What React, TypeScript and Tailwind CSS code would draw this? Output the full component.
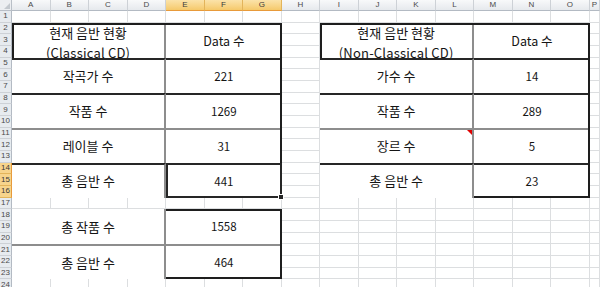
const COLS = ['A', 'B', 'C', 'D', 'E', 'F', 'G', 'H', 'I', 'J', 'K', 'L', 'M', 'N', 'O', 'P'];
const SELECTED_COLS = ['E', 'F', 'G'];
const SELECTED_ROWS = [14, 15, 16];
const ROWS = Array.from({ length: 24 }, (_, i) => i + 1);

const GRID =
  'grid grid-cols-[12px_repeat(15,38.53px)_minmax(0,1fr)] grid-rows-[11px_repeat(24,11.68px)]';

const FONT = "font-['Noto_Sans_CJK_KR','Noto_Sans',sans-serif]";

type Row = { rows: string; label: string; value: string; line: 'dark' | 'gray' | 'none' };

const LEFT_COL = 'col-start-2 col-end-6';
const LEFT_VAL = 'col-start-6 col-end-9';
const RIGHT_COL = 'col-start-10 col-end-14';
const RIGHT_VAL = 'col-start-14 col-end-17';

const LEFT_ROWS: Row[] = [
  { rows: 'row-start-6 row-end-9', label: '작곡가 수', value: '221', line: 'dark' },
  { rows: 'row-start-9 row-end-12', label: '작품 수', value: '1269', line: 'dark' },
  { rows: 'row-start-12 row-end-15', label: '레이블 수', value: '31', line: 'gray' },
  { rows: 'row-start-15 row-end-18', label: '총 음반 수', value: '441', line: 'dark' },
];

const TOTAL_ROWS: Row[] = [
  { rows: 'row-start-19 row-end-22', label: '총 작품 수', value: '1558', line: 'none' },
  { rows: 'row-start-22 row-end-25', label: '총 음반 수', value: '464', line: 'gray' },
];

const RIGHT_ROWS: Row[] = [
  { rows: 'row-start-6 row-end-9', label: '가수 수', value: '14', line: 'dark' },
  { rows: 'row-start-9 row-end-12', label: '작품 수', value: '289', line: 'dark' },
  { rows: 'row-start-12 row-end-15', label: '장르 수', value: '5', line: 'gray' },
  { rows: 'row-start-15 row-end-18', label: '총 음반 수', value: '23', line: 'dark' },
];

const lineClass = (line: Row['line']) =>
  line === 'dark' ? 'border-t-2 border-t-[#262626]' : line === 'gray' ? 'border-t-2 border-t-[#8d8d8d]' : '';

function Sheet() {
  return (
    <div className={`${GRID} col-start-1 row-start-1`}>
      {/* column header row */}
      <div className="relative bg-[#eceef1] border-r border-b border-[#b9bfc7]">
        <svg className="absolute right-[1px] bottom-[1px]" width="6" height="6" viewBox="0 0 6 6">
          <polygon points="6,0 6,6 0,6" fill="#c3c8ce" />
        </svg>
      </div>
      {COLS.map((c) => {
        const sel = SELECTED_COLS.includes(c);
        return (
          <div
            key={c}
            className={
              sel
                ? 'flex items-center justify-center bg-gradient-to-b from-[#fbe3a9] to-[#f5c96a] border-r border-[#e3b45a] border-b border-b-[#e89a3a] text-[8px] text-[#3a3a3a] font-["Liberation_Sans",sans-serif]'
                : 'flex items-center justify-center bg-gradient-to-b from-[#f8f9fa] to-[#e6e9ed] border-r border-[#cdd1d6] border-b border-b-[#b3bac3] text-[8px] text-[#4a4a4a] font-["Liberation_Sans",sans-serif]'
            }
          >
            {c}
          </div>
        );
      })}

      {ROWS.map((r) => {
        const sel = SELECTED_ROWS.includes(r);
        return [
          <div
            key={`h${r}`}
            className={
              sel
                ? 'flex items-center justify-center bg-[#f7d48c] border-b border-[#e3b45a] border-r border-r-[#e89a3a] text-[8px] leading-none text-[#3a3a3a] font-["Liberation_Sans",sans-serif]'
                : 'flex items-center justify-center bg-[#e7ebef] border-b border-[#cdd1d6] border-r border-r-[#b3bac3] text-[8px] leading-none text-[#4a4a4a] font-["Liberation_Sans",sans-serif]'
            }
          >
            {r}
          </div>,
          ...COLS.map((c) => <div key={`${c}${r}`} className="bg-white border-r border-b border-[#dcdee0]" />),
        ];
      })}
    </div>
  );
}

function Table({
  labelCol,
  valueCol,
  outer,
  header,
  rows,
  comment,
}: {
  labelCol: string;
  valueCol: string;
  outer: string;
  header?: string[];
  rows: Row[];
  comment?: string;
}) {
  return (
    <>
      {header && (
        <>
          <div
            className={`${labelCol} row-start-3 row-end-6 bg-white border-r-2 border-r-[#8d8d8d] flex flex-col items-center justify-center text-[13px] leading-[20px] text-[#151515] pt-[5px] ${FONT}`}
          >
            <span className="whitespace-nowrap">{header[0]}</span>
            <span className="whitespace-nowrap tracking-[0.2px]">{header[1]}</span>
          </div>
          <div
            className={`${valueCol} row-start-3 row-end-6 bg-white flex items-center justify-center text-[12.5px] text-[#151515] pt-[2px] ${FONT}`}
          >
            Data 수
          </div>
        </>
      )}
      {rows.map((row) => (
        <div key={row.rows + row.label} className="contents">
          <div
            className={`${labelCol} ${row.rows} ${lineClass(row.line)} relative bg-white border-r-2 border-r-[#8d8d8d] flex items-center justify-center text-[13px] text-[#151515] ${FONT}`}
          >
            {row.label}
            {comment === row.label && (
              <span className="absolute top-0 right-0 w-0 h-0 border-l-[5px] border-l-transparent border-t-[5px] border-t-[#e00000]" />
            )}
          </div>
          <div
            className={`${valueCol} ${row.rows} ${lineClass(row.line)} bg-white flex items-center justify-center text-[11.5px] text-[#151515] ${FONT}`}
          >
            {row.value}
          </div>
        </div>
      ))}
      <div className={`${outer} border-2 border-[#1e1e1e] pointer-events-none`} />
    </>
  );
}

export default function App() {
  return (
    <div className="w-[600px] h-[287px] overflow-hidden bg-white grid">
      <Sheet />
      <div className={`${GRID} col-start-1 row-start-1`}>
        <Table
          labelCol={LEFT_COL}
          valueCol={LEFT_VAL}
          outer="col-start-2 col-end-9 row-start-3 row-end-18"
          header={['현재 음반 현황', '(Classical CD)']}
          rows={LEFT_ROWS}
        />
        <Table
          labelCol={LEFT_COL}
          valueCol={LEFT_VAL}
          outer="col-start-2 col-end-9 row-start-19 row-end-25"
          rows={TOTAL_ROWS}
        />
        <Table
          labelCol={RIGHT_COL}
          valueCol={RIGHT_VAL}
          outer="col-start-10 col-end-17 row-start-3 row-end-18"
          header={['현재 음반 현황', '(Non-Classical CD)']}
          rows={RIGHT_ROWS}
          comment="장르 수"
        />
        {/* active selection on E14:G16 */}
        <div className="col-start-6 col-end-9 row-start-15 row-end-18 relative border-2 border-[#262626] pointer-events-none">
          <span className="absolute -right-[4px] -bottom-[4px] w-[6px] h-[6px] bg-[#262626] border border-white" />
        </div>
      </div>
    </div>
  );
}
